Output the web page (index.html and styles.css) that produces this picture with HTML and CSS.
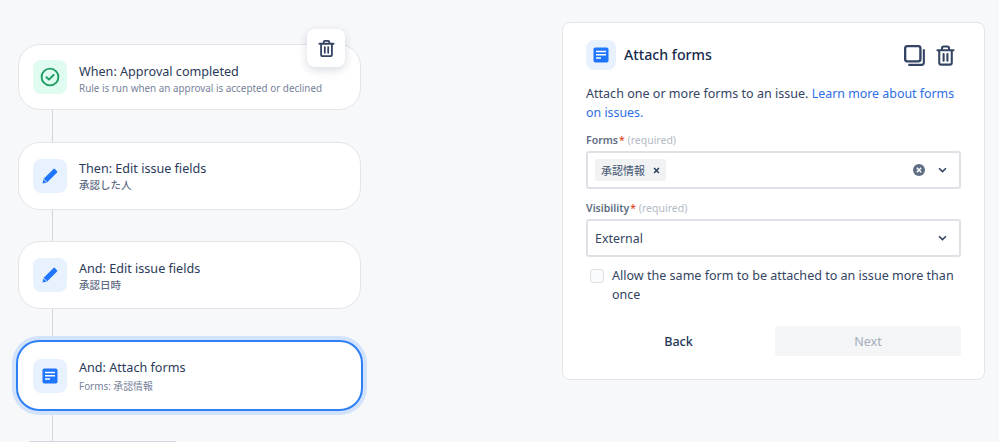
FILE: index.html
```html
<!DOCTYPE html>
<html lang="en">
<head>
<meta charset="utf-8">
<title>Attach forms</title>
<link rel="stylesheet" href="styles.css">
</head>
<body>
<main class="page">
  <section class="flow">
    <article class="card card-first">
      <span class="tile tile-green">
        <svg class="glyph" viewBox="0 0 20 20"><circle cx="10" cy="10" r="8.4" fill="none" stroke="#1f9d63" stroke-width="1.9"/><path d="M6.4 10.2l2.6 2.4 4.6-4.6" fill="none" stroke="#1f9d63" stroke-width="1.9" stroke-linecap="round" stroke-linejoin="round"/></svg>
      </span>
      <div class="copy">
        <div class="title">When: Approval completed</div>
        <div class="sub">Rule is run when an approval is accepted or declined</div>
      </div>
      <button class="float-trash" type="button" aria-label="Delete">
        <svg class="trash-small" viewBox="0 0 20 20"><path d="M2.5 5h15M7 5V3.4C7 2.6 7.6 2 8.4 2h3.2c.8 0 1.4.6 1.4 1.4V5M4.3 5v11.2c0 1 .8 1.8 1.8 1.8h7.8c1 0 1.8-.8 1.8-1.8V5M8.2 8.5v6M11.8 8.5v6" fill="none" stroke="#344563" stroke-width="1.9" stroke-linecap="round" stroke-linejoin="round"/></svg>
      </button>
    </article>
    <div class="line line-a"></div>
    <article class="card card-mid card-second">
      <span class="tile">
        <svg class="glyph-pencil" viewBox="0 0 20 20"><path d="M1.700 18.300l1-5L13.600 2.500c.6-.6 1.500-.6 2.100 0l1.900 1.900c.6.6.6 1.500 0 2.100L6.700 17.300z" fill="#1f75fe"/><path d="M2.700 13.300l4 4" stroke="#fff" stroke-width="1"/></svg>
      </span>
      <div class="copy">
        <div class="title">Then: Edit issue fields</div>
        <div class="sub sub-cjk">承認した人</div>
      </div>
    </article>
    <div class="line line-b"></div>
    <article class="card card-mid card-third">
      <span class="tile">
        <svg class="glyph-pencil" viewBox="0 0 20 20"><path d="M1.700 18.300l1-5L13.600 2.500c.6-.6 1.500-.6 2.100 0l1.900 1.900c.6.6.6 1.500 0 2.100L6.700 17.300z" fill="#1f75fe"/><path d="M2.700 13.300l4 4" stroke="#fff" stroke-width="1"/></svg>
      </span>
      <div class="copy">
        <div class="title">And: Edit issue fields</div>
        <div class="sub sub-cjk">承認日時</div>
      </div>
    </article>
    <div class="line line-c"></div>
    <article class="card card-active">
      <span class="tile">
        <svg class="glyph" viewBox="0 0 20 20"><rect x="2.500" y="2.500" width="15" height="15" rx="1.800" fill="#1f75fe"/><path d="M5 6.500h10M5 9.800h10M5 13h5" stroke="#fff" stroke-width="1.400"/></svg>
      </span>
      <div class="copy">
        <div class="title">And: Attach forms</div>
        <div class="sub">Forms: 承認情報</div>
      </div>
    </article>
    <div class="line line-d"></div>
    <div class="next-edge"></div>
  </section>

  <section class="panel">
    <header class="panel-head">
      <span class="tile tile-head">
        <svg class="glyph" viewBox="0 0 20 20"><rect x="2.500" y="2.500" width="15" height="15" rx="1.800" fill="#1f75fe"/><path d="M5 6.500h10M5 9.800h10M5 13h5" stroke="#fff" stroke-width="1.400"/></svg>
      </span>
      <h1 class="panel-title">Attach forms</h1>
      <span class="head-tools">
        <svg class="tool-copy" viewBox="0 0 22 22"><rect x="1.200" y="1.200" width="16" height="16" rx="2.500" fill="none" stroke="#344563" stroke-width="2.500"/><path d="M20.800 4.500v13.800c0 1.400-1.100 2.500-2.500 2.500H4.500" fill="none" stroke="#344563" stroke-width="2.200"/></svg>
        <svg class="tool-trash" viewBox="0 0 20 22"><path d="M1.500 5.500h17M6.300 5.500V3.300c0-1 .8-1.800 1.800-1.800h3.800c1 0 1.800.8 1.800 1.800v2.200M3.400 5.500v13c0 1.200.9 2.100 2.100 2.100h9c1.200 0 2.100-.9 2.100-2.100v-13M8 9.500v7M12 9.500v7" fill="none" stroke="#344563" stroke-width="2.200" stroke-linecap="round" stroke-linejoin="round"/></svg>
      </span>
    </header>
    <p class="intro">Attach one or more forms to an issue. <a class="link" href="#">Learn more about forms on issues.</a></p>

    <div class="label label-forms">Forms<span class="star">*</span> <span class="req">(required)</span></div>
    <div class="field field-forms">
      <span class="tag">承認情報<svg class="tag-x" viewBox="0 0 8 8"><path d="M1.200 1.200l5.600 5.600M6.800 1.200L1.200 6.800" stroke="#253858" stroke-width="1.600"/></svg></span>
      <span class="field-end">
        <svg class="clear" viewBox="0 0 12 12"><circle cx="6" cy="6" r="6" fill="#5e6c84"/><path d="M3.800 3.800l4.400 4.400M8.200 3.800L3.800 8.200" stroke="#fff" stroke-width="1.500"/></svg>
        <svg class="chev" viewBox="0 0 10 6"><path d="M1.200 1l3.800 3.800L8.800 1" fill="none" stroke="#344563" stroke-width="1.800"/></svg>
      </span>
    </div>

    <div class="label label-vis">Visibility<span class="star">*</span> <span class="req">(required)</span></div>
    <div class="field field-vis">
      <span class="value">External</span>
      <span class="field-end">
        <svg class="chev" viewBox="0 0 10 6"><path d="M1.200 1l3.800 3.800L8.800 1" fill="none" stroke="#344563" stroke-width="1.800"/></svg>
      </span>
    </div>

    <div class="check-row">
      <span class="box"></span>
      <span class="check-text">Allow the same form to be attached to an issue more than once</span>
    </div>

    <div class="actions">
      <button class="btn btn-back" type="button">Back</button>
      <button class="btn btn-next" type="button">Next</button>
    </div>
  </section>
</main>
</body>
</html>
```

FILE: styles.css
```css
* { box-sizing: border-box; }
html, body { margin: 0; height: 100%; overflow: hidden; background: #f7f8fa; }
body { font-family: "Noto Sans", "Noto Sans CJK JP", sans-serif; color: #253858; }
.page { display: flex; align-items: flex-start; height: 442px; overflow: hidden; }

.flow { width: 343px; margin: 44px 0 0 18px; flex: none; display: flex; flex-direction: column; }
.card { position: relative; display: flex; align-items: center; gap: 12px; background: #fff; border: 1px solid #e3e5ea; border-radius: 22px; padding: 0 14px; }
.card-first { height: 66px; }
.card-first .copy { margin-top: 5px; }
.card-first .sub { margin-top: 0; }
.card-mid { height: 68px; }
.card-mid .sub { margin-top: 0; }
.card-second .copy { margin-top: 1px; }
.card-third .copy { margin-top: 3px; }
.card-active { height: 71px; margin: 0 -2px; padding: 0 15px; border: 2px solid #2f80f5; border-radius: 23px; box-shadow: 0 0 0 4px #d3e3fb; }
.card-active .copy { margin-top: 1px; }
.card-active .sub { margin-top: 2px; }
.line { width: 1px; margin-left: 34px; background: #d3d6dc; }
.line-a { height: 32px; }
.line-b { height: 31px; }
.line-c { height: 31px; }
.line-d { height: 30px; }
.next-edge { width: 146px; height: 1px; margin-left: 12px; background: #d3d6dc; }

.tile { width: 34px; height: 34px; flex: none; display: flex; align-items: center; justify-content: center; background: #e8f2ff; border-radius: 8px; }
.tile-green { background: #e0fbf0; }
.glyph { width: 20px; height: 20px; display: block; }
.glyph-pencil { width: 18px; height: 18px; display: block; }
.copy { min-width: 0; }
.title { font-size: 12.600px; line-height: 18px; color: #2b3a59; }
.sub { font-size: 9.900px; line-height: 15px; margin-top: 1px; color: #76829a; }
.sub-cjk { font-size: 10.500px; color: #5e6c84; font-weight: 500; }

.float-trash { position: absolute; top: -16px; right: 15px; width: 38px; height: 38px; display: flex; align-items: center; justify-content: center; padding: 0; background: #fff; border: 0; border-radius: 8px; box-shadow: 0 3px 10px rgba(9, 30, 66, .16); }
.trash-small { width: 19px; height: 19px; display: block; }

.panel { width: 423px; height: 358px; margin: 22px 0 0 201px; flex: none; padding: 17px 23px 0; background: #fff; border: 1px solid #e3e5ea; border-radius: 8px; }
.panel-head { display: flex; align-items: center; gap: 8px; height: 30px; }
.tile-head { width: 30px; height: 30px; }
.panel-title { flex: 1; margin: 0; font-size: 14.200px; line-height: 20px; font-weight: 500; color: #172b4d; }
.head-tools { display: flex; align-items: center; gap: 11px; margin-right: 6px; }
.tool-copy { width: 21px; height: 21px; display: block; }
.tool-trash { width: 19px; height: 23px; display: block; }

.intro { margin: 14px 0 0; font-size: 12.550px; line-height: 19px; color: #344563; }
.link { font-size: 12.400px; color: #2d6ee6; text-decoration: none; }
.label { font-size: 10.500px; line-height: 14px; font-weight: 600; color: #5e6c84; }
.label-forms { margin-top: 11px; }
.label-vis { margin-top: 12px; }
.star { margin-left: 1px; color: #de350b; font-weight: 400; }
.req { font-weight: 400; color: #b3bac5; }

.field { display: flex; align-items: center; background: #fff; border: 2px solid #dfe1e6; border-radius: 3px; }
.field-forms { height: 38px; padding-left: 7px; margin-top: 4px; }
.field-vis { height: 38px; padding-left: 7px; margin-top: 4px; }
.tag { display: flex; align-items: center; height: 22px; padding: 0 6px; gap: 8px; background: #f1f2f4; border-radius: 2px; font-size: 11px; color: #42526e; }
.tag-x { width: 7px; height: 7px; display: block; }
.value { font-size: 12.400px; color: #344563; }
.field-end { margin-left: auto; display: flex; align-items: center; gap: 13px; padding-right: 12px; }
.clear { width: 12px; height: 12px; display: block; }
.chev { width: 9px; height: 6px; display: block; }

.check-row { display: flex; gap: 8px; margin-top: 9px; padding-left: 4px; }
.box { width: 14px; height: 14px; margin-top: 3px; flex: none; background: #fafbfc; border: 1.500px solid #dfe1e6; border-radius: 3px; }
.check-text { font-size: 12.550px; line-height: 19px; color: #344563; }

.actions { display: grid; grid-template-columns: 1fr 186px; gap: 0; margin-top: 22px; }
.btn { height: 30px; padding: 1px 0 0; border: 0; border-radius: 3px; background: none; font: inherit; font-size: 12.600px; line-height: 29px; }
.btn-back { font-weight: 500; color: #253858; padding-right: 4px; }
.btn-next { background: #f4f5f7; color: #a5adba; }
```
